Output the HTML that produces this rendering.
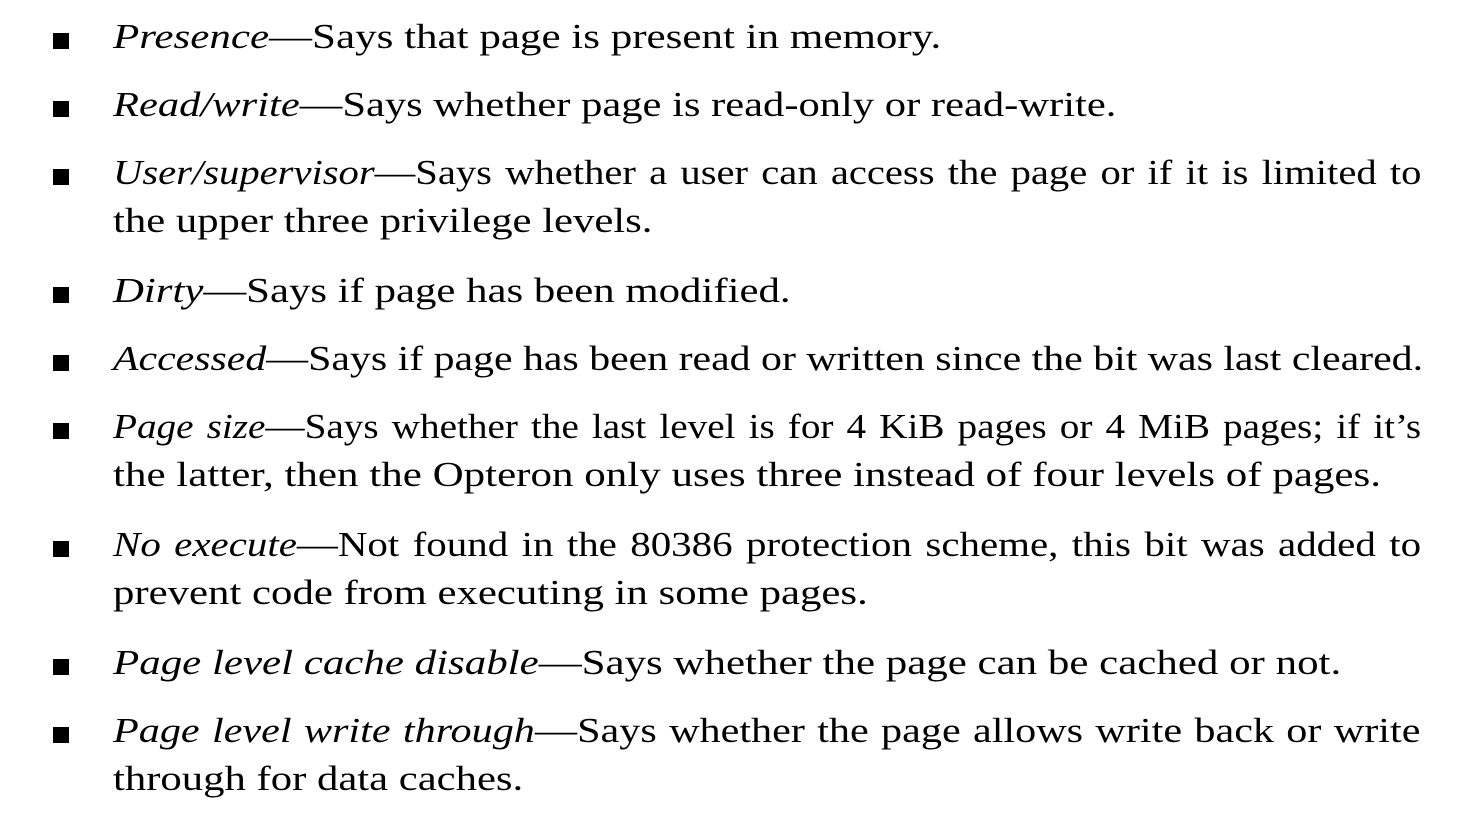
<!DOCTYPE html>
<html><head><meta charset="utf-8"><style>
html,body{margin:0;padding:0;background:#fff;width:1462px;height:836px;overflow:hidden}
.b{position:absolute;left:53px;width:16px;height:16px;background:#000}
.l{position:absolute;left:113px;margin:0;font-family:"Liberation Serif",serif;font-size:35px;line-height:48px;color:#000;transform-origin:0 0;white-space:nowrap}
.j{white-space:normal;text-align:justify;text-align-last:justify;height:48px;overflow:visible}
i{font-style:italic}
</style></head><body>
<div class="b" style="top:33px"></div>
<div class="l" style="top:13px;transform:scaleX(1.229)"><i>Presence</i>—Says that page is present in memory.</div>
<div class="b" style="top:101px"></div>
<div class="l" style="top:81px;transform:scaleX(1.216)"><i>Read/write</i>—Says whether page is read-only or read-write.</div>
<div class="b" style="top:169px"></div>
<div class="l j" style="top:149px;width:1128px;transform:scaleX(1.16)"><i>User/supervisor</i>—Says whether a user can access the page or if it is limited to</div>
<div class="l" style="top:197px;transform:scaleX(1.22)">the upper three privilege levels.</div>
<div class="b" style="top:287px"></div>
<div class="l" style="top:267px;transform:scaleX(1.223)"><i>Dirty</i>—Says if page has been modified.</div>
<div class="b" style="top:355px"></div>
<div class="l" style="top:335px;transform:scaleX(1.195)"><i>Accessed</i>—Says if page has been read or written since the bit was last cleared.</div>
<div class="b" style="top:423px"></div>
<div class="l j" style="top:403px;width:1168px;transform:scaleX(1.12)"><i>Page size</i>—Says whether the last level is for 4 KiB pages or 4 MiB pages; if it’s</div>
<div class="l" style="top:451px;transform:scaleX(1.229)">the latter, then the Opteron only uses three instead of four levels of pages.</div>
<div class="b" style="top:541px"></div>
<div class="l j" style="top:521px;width:1118px;transform:scaleX(1.17)"><i>No execute</i>—Not found in the 80386 protection scheme, this bit was added to</div>
<div class="l" style="top:569px;transform:scaleX(1.223)">prevent code from executing in some pages.</div>
<div class="b" style="top:659px"></div>
<div class="l" style="top:639px;transform:scaleX(1.227)"><i>Page level cache disable</i>—Says whether the page can be cached or not.</div>
<div class="b" style="top:727px"></div>
<div class="l j" style="top:707px;width:1085px;transform:scaleX(1.205)"><i>Page level write through</i>—Says whether the page allows write back or write</div>
<div class="l" style="top:755px;transform:scaleX(1.22)">through for data caches.</div>
</body></html>
